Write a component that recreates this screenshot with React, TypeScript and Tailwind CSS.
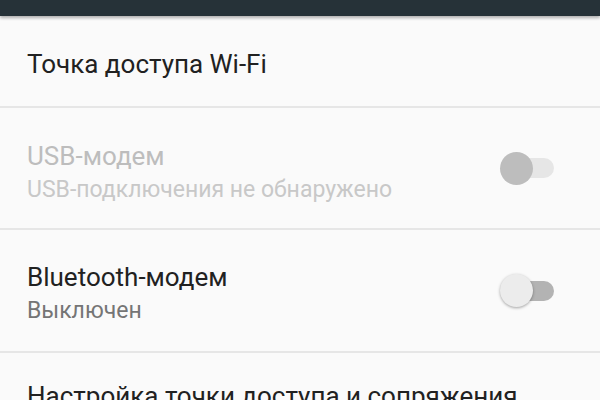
import React from "react";

type SwitchProps = { disabled?: boolean };

function Switch({ disabled }: SwitchProps) {
  return (
    <div className="relative w-[56px] h-[34px] flex items-center">
      <div
        className={
          "absolute left-[6px] right-[2px] h-[20px] rounded-full " +
          (disabled ? "bg-[#e6e6e6]" : "bg-[#b3b3b3]")
        }
      />
      <div
        className={
          "absolute left-0 w-[33px] h-[33px] rounded-full " +
          (disabled
            ? "bg-[#bdbdbd]"
            : "bg-[#ececec] shadow-[0_1px_3px_rgba(0,0,0,0.35)]")
        }
      />
    </div>
  );
}

function Divider() {
  return <div className="h-[2px] bg-[#e6e6e6]" />;
}

export default function App() {
  return (
    <div
      className="w-[600px] h-[400px] overflow-hidden bg-[#fafafa]"
      style={{ fontFamily: "Roboto, 'Noto Sans', sans-serif" }}
    >
      {/* status / action bar */}
      <div className="relative z-10 h-[16px] bg-[#263238] shadow-[0_2px_3px_rgba(0,0,0,0.3)]" />

      <div className="h-[90px] flex items-center px-[27px]">
        <span className="text-[26px] leading-[32px] text-[#212121] pt-[6px]">
          Точка доступа Wi-Fi
        </span>
      </div>
      <Divider />

      <div className="h-[120px] flex items-center justify-between pl-[27px] pr-[44px]">
        <div className="flex flex-col pt-[10px]">
          <span className="text-[26px] leading-[34px] text-[#bdbdbd]">USB-модем</span>
          <span className="text-[23px] leading-[34px] text-[#c8c8c8]">
            USB-подключения не обнаружено
          </span>
        </div>
        <Switch disabled />
      </div>
      <Divider />

      <div className="h-[121px] flex items-center justify-between pl-[27px] pr-[44px]">
        <div className="flex flex-col pt-[6px]">
          <span className="text-[26px] leading-[34px] text-[#212121]">Bluetooth-модем</span>
          <span className="text-[23px] leading-[34px] text-[#757575]">Выключен</span>
        </div>
        <Switch />
      </div>
      <Divider />

      <div className="px-[27px] pt-[28px]">
        <span className="text-[26px] leading-[30px] text-[#212121] whitespace-nowrap">
          Настройка точки доступа и сопряжения
        </span>
      </div>
    </div>
  );
}
